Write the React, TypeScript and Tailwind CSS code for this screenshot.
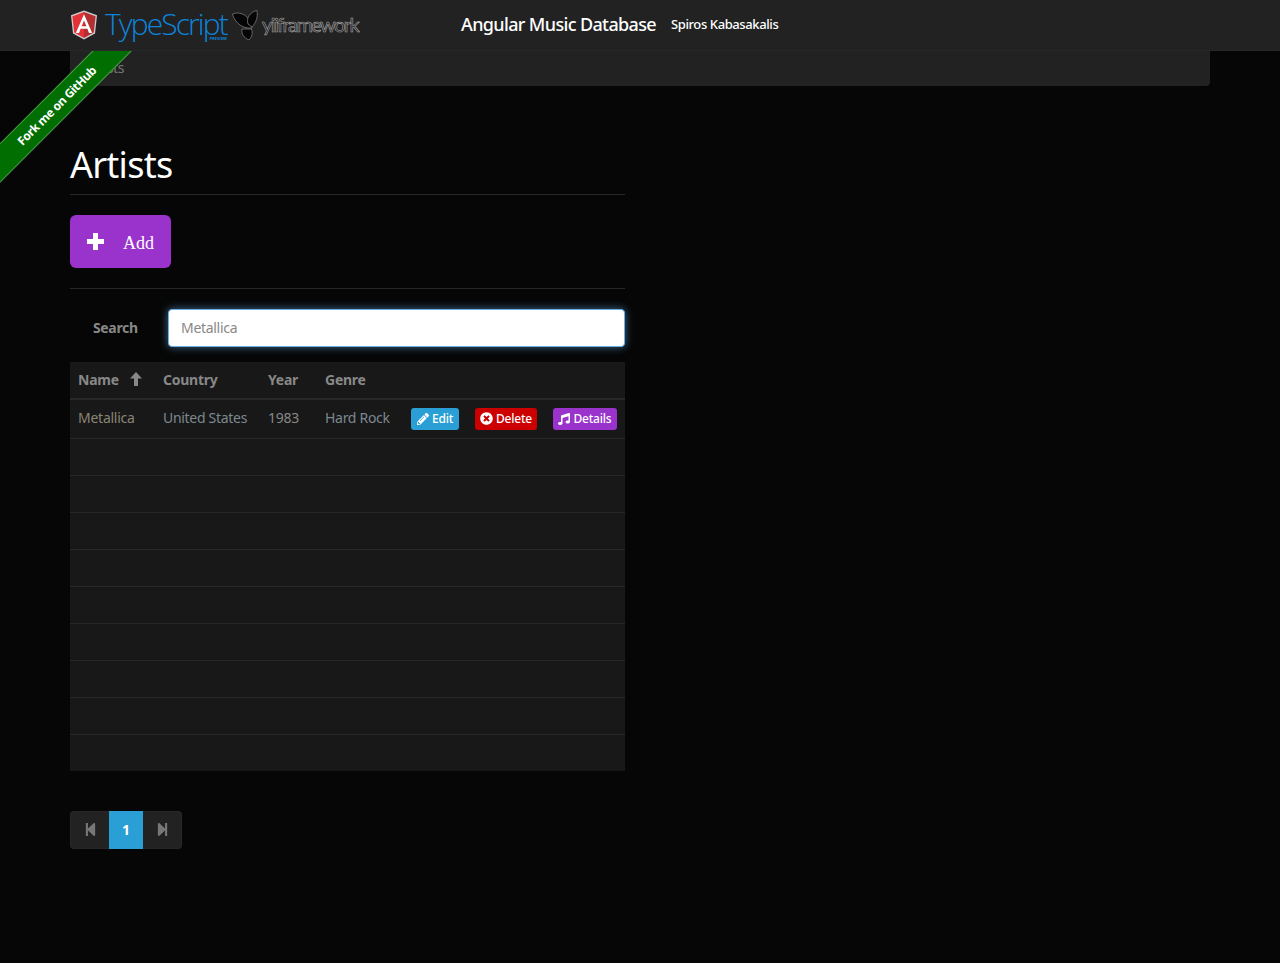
import { FaMusic, FaPencilAlt, FaStepBackward, FaStepForward, FaTimesCircle } from 'react-icons/fa';

const EMPTY_ROWS = [0, 1, 2, 3, 4, 5, 6, 7, 8];

function AngularLogo() {
  return (
    <svg viewBox="0 0 28 30" className="h-[30px] w-[28px] shrink-0">
      <path d="M14 0.5 L1 5.2 L3 23.5 L14 29.5 L25 23.5 L27 5.2 Z" fill="#cfcfcf" />
      <path d="M14 2 L2.4 6.2 L4.2 22.6 L14 28 Z" fill="#e23237" />
      <path d="M14 2 L25.6 6.2 L23.8 22.6 L14 28 Z" fill="#b52e31" />
      <path
        d="M14 4.2 L5.8 23 L9 23 L10.6 18.8 L17.4 18.8 L19 23 L22.2 23 Z M14 10.6 L16.4 16.2 L11.6 16.2 Z"
        fill="#fff"
        fillRule="evenodd"
      />
    </svg>
  );
}

function YiiLogo() {
  return (
    <svg viewBox="0 0 28 30" className="h-[30px] w-[28px] shrink-0">
      <path d="M0.5 4 C8 1 18 5 20 18 C12 19 3 14 0.5 4 Z" fill="#050505" stroke="#8a8a8a" strokeWidth="0.7" />
      <path d="M16 14 C14 8 18 2 25 0.5 C26 7 24 13 20 17 Z" fill="#050505" stroke="#8a8a8a" strokeWidth="0.7" />
      <path d="M10 19 C14 19 18 19 19.5 19 C21 23 20 27 17 30 C12 28 9 24 10 19 Z" fill="#050505" stroke="#8a8a8a" strokeWidth="0.7" />
    </svg>
  );
}

function PlusGlyph() {
  return (
    <svg viewBox="0 0 17 17" className="-mt-[1px] h-[17px] w-[17px]">
      <path d="M6 0 H11 V6 H17 V11 H11 V17 H6 V11 H0 V6 H6 Z" fill="#fff" />
    </svg>
  );
}

function ArrowUpGlyph() {
  return (
    <svg viewBox="0 0 12 14" className="h-[14px] w-[12px]">
      <path d="M6 0 L12 6.5 H8 V14 H4 V6.5 H0 Z" fill="#888" />
    </svg>
  );
}

function Ribbon() {
  return (
    <div className="absolute left-0 top-[51px] h-[132px] w-[132px] overflow-hidden">
      <div className="absolute left-[-58px] top-[41px] flex h-[28px] w-[230px] rotate-[-45deg] items-center justify-center border-y border-[#4f9b4f] bg-[#006e00] text-[12px] font-bold tracking-[-0.4px] text-white">
        Fork me on GitHub
      </div>
    </div>
  );
}

function ActionButton({ color, icon, label }: { color: string; icon: React.ReactNode; label: string }) {
  return (
    <a className={`inline-flex h-[22px] items-center justify-center gap-[3px] rounded-[3px] text-[12px] font-medium tracking-[-0.2px] text-white ${color}`}>
      {icon}
      {label}
    </a>
  );
}

export default function App() {
  return (
    <div className="relative min-h-[963px] bg-[#060606] font-['Noto_Sans','Open_Sans',sans-serif] text-[14px] tracking-[-0.25px] text-[#888]">
      <header className="h-[51px] border-b border-[#282828] bg-[#222]">
        <div className="flex h-[50px] items-center pl-[70px]">
          <AngularLogo />
          <span className="relative -mt-[3px] ml-[7px] w-[122px] shrink-0 whitespace-nowrap font-['Open_Sans',sans-serif] text-[30px] font-light leading-none tracking-[-1.9px] text-[#0c84dc]">
            TypeScript
            <span className="absolute right-0 top-[28px] text-[4px] font-bold leading-none tracking-normal">PREVIEW</span>
          </span>
          <span className="ml-[5px]">
            <YiiLogo />
          </span>
          <span className="-mt-[2px] ml-[2px] w-[98px] shrink-0 whitespace-nowrap font-['Lato',sans-serif] text-[20px] leading-none tracking-[-1.6px] text-[#1a1a1a] [-webkit-text-stroke:0.6px_#aaa]">
            yiiframework
          </span>
          <span className="-mt-[2px] ml-[101px] shrink-0 whitespace-nowrap text-[18px] font-medium tracking-[-0.64px] text-white">
            Angular Music Database
          </span>
          <span className="-mt-[1px] ml-[15px] whitespace-nowrap text-[13px] font-medium tracking-[-0.4px] text-white">
            Spiros Kabasakalis
          </span>
        </div>
      </header>

      <Ribbon />

      <main className="pl-[70px]">
        <div className="flex h-[35px] w-[1140px] items-center rounded-b-[4px] bg-[#222] px-[15px] pb-[2px] text-[14px] tracking-[-0.4px] text-[#777]">
          Artists
        </div>

        <div className="w-[555px]">
          <h1 className="mt-[59px] border-b border-[#282828] pb-[9px] text-[36px] leading-[40px] tracking-[-0.75px] text-white">Artists</h1>

          <button className="mt-[20px] flex h-[53px] w-[101px] items-center rounded-[6px] bg-[#9933cc] pl-[17px] font-['Liberation_Serif',serif] text-[18px] tracking-normal text-white">
            <PlusGlyph />
            <span className="ml-[19px] mt-[3px]">Add</span>
          </button>

          <hr className="mt-[20px] border-[#282828]" />

          <div className="mt-[20px] flex items-center">
            <label className="w-[98px] pb-[2px] pl-[23px] text-[14px] font-bold tracking-[-0.35px]">Search</label>
            <input
              readOnly
              value="Metallica"
              className="h-[38px] flex-1 rounded-[4px] border border-[#66afe9] bg-white px-[12px] pb-[2px] text-[14px] tracking-[-0.3px] text-[#888] shadow-[0_0_8px_rgba(102,175,233,0.6)] outline-none"
            />
          </div>

          <table className="mt-[15px] w-full table-fixed border-collapse bg-[#181818] text-left">
            <colgroup>
              <col className="w-[85px]" />
              <col className="w-[105px]" />
              <col className="w-[57px]" />
              <col className="w-[86px]" />
              <col />
            </colgroup>
            <thead>
              <tr className="h-[37px] border-b-2 border-[#282828] font-bold">
                <th className="px-[8px] pb-[2px]">
                  <span className="flex items-center gap-[11px]">
                    Name
                    <ArrowUpGlyph />
                  </span>
                </th>
                <th className="px-[8px] pb-[2px]">Country</th>
                <th className="px-[8px] pb-[2px]">Year</th>
                <th className="px-[8px] pb-[2px]">Genre</th>
                <th />
              </tr>
            </thead>
            <tbody>
              <tr className="h-[39px] border-b border-[#282828]">
                <td className="px-[8px] pb-[2px] text-[#8a8476]">Metallica</td>
                <td className="whitespace-nowrap px-[8px] pb-[2px] tracking-[-0.3px] text-[#7c8890]">United States</td>
                <td className="px-[8px] pb-[2px]">1983</td>
                <td className="whitespace-nowrap px-[8px] pb-[2px] tracking-[-0.3px] text-[#7c8890]">Hard Rock</td>
                <td className="px-[8px]">
                  <div className="flex items-center justify-between">
                    <ActionButton color="w-[48px] bg-[#2a9fd6]" icon={<FaPencilAlt className="h-[12px] w-[12px]" />} label="Edit" />
                    <ActionButton color="w-[62px] bg-[#cc0000]" icon={<FaTimesCircle className="h-[13px] w-[13px]" />} label="Delete" />
                    <ActionButton color="w-[64px] bg-[#9933cc]" icon={<FaMusic className="h-[12px] w-[12px]" />} label="Details" />
                  </div>
                </td>
              </tr>
              {EMPTY_ROWS.map((i) => (
                <tr key={i} className="h-[37px] border-b border-[#282828] last:border-b-0">
                  <td colSpan={5} />
                </tr>
              ))}
            </tbody>
          </table>

          <nav className="mt-[40px] flex h-[38px] w-[112px] text-[#777]">
            <span className="flex w-[39px] items-center justify-center rounded-l-[4px] border border-r-0 border-[#282828] bg-[#222] pb-[1px]">
              <FaStepBackward className="h-[15px] w-[13px]" />
            </span>
            <span className="flex w-[34px] items-center justify-center bg-[#2a9fd6] pb-[1px] text-[14px] font-bold text-white">1</span>
            <span className="flex w-[39px] items-center justify-center rounded-r-[4px] border border-l-0 border-[#282828] bg-[#222] pb-[1px]">
              <FaStepForward className="h-[15px] w-[13px]" />
            </span>
          </nav>
        </div>
      </main>
    </div>
  );
}
